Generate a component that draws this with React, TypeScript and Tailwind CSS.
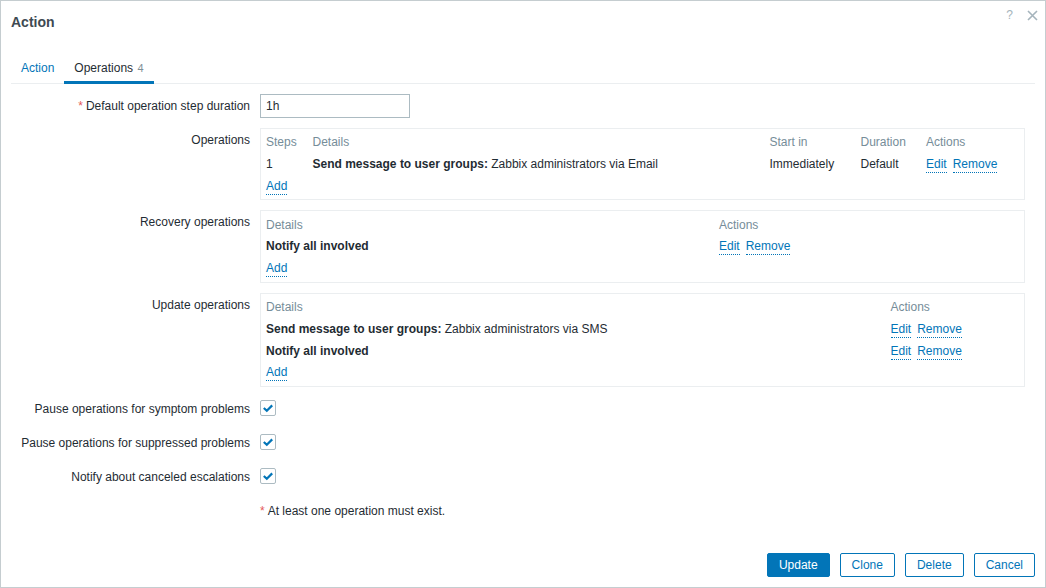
import React from "react";

const Link = ({ children }: { children: React.ReactNode }) => (
  <a className="text-[#0275b8] border-b border-dotted border-[#0275b8] leading-[15px] inline-block mt-[1px]">{children}</a>
);

const Actions = () => (
  <div className="flex gap-[6px]">
    <Link>Edit</Link>
    <Link>Remove</Link>
  </div>
);

const Cell = ({ children, head, short }: { children?: React.ReactNode; head?: boolean; short?: boolean }) => (
  <div className={`${short ? "h-[21px]" : "h-[22px]"} flex items-center ${head ? "text-[#768d99]" : ""}`}>{children}</div>
);

const Row = ({ label, required, children }: { label?: string; required?: boolean; children: React.ReactNode }) => (
  <div className="flex gap-[10px]">
    <div className="w-[249px] shrink-0 text-right leading-[24px]">
      {required && <span className="text-[#e45959] mr-[3px]">*</span>}
      {label}
    </div>
    <div className="flex-1 min-w-0">{children}</div>
  </div>
);

const Check = () => (
  <div className="h-[24px] flex items-start pt-[3px]">
    <div className="w-4 h-4 border border-[#acbbc2] rounded-[2px] flex items-center justify-center">
      <svg width="12" height="12" viewBox="0 0 12 12" fill="none">
        <path d="M1.8 6 L4.8 8.8 L10.2 3.4" stroke="#0275b8" strokeWidth="2.2" />
      </svg>
    </div>
  </div>
);

const Button = ({ children, primary }: { children: React.ReactNode; primary?: boolean }) => (
  <button
    className={`h-6 px-[11px] rounded-[2px] border border-[#0275b8] leading-none ${
      primary ? "bg-[#0275b8] text-white" : "bg-white text-[#0275b8]"
    }`}
  >
    {children}
  </button>
);

export default function App() {
  return (
    <div className="w-[1046px] h-[588px] border border-[#c5cdd0] bg-white flex flex-col text-[12px] text-[#1f2c33] font-['Liberation_Sans',Arial,sans-serif] overflow-hidden">
      <div className="flex justify-between pl-[10px] pr-[7px] h-[52px] shrink-0">
        <h4 className="text-[14px] font-bold text-[#3e4a52] leading-[16px] mt-[13px]">Action</h4>
        <div className="flex items-center gap-[13px] h-[28px] text-[#a5b4bc]">
          <span className="text-[12px] mr-[1px]">?</span>
          <svg width="11" height="11" viewBox="0 0 11 11" fill="none">
            <path d="M1 1 L10 10 M10 1 L1 10" stroke="#a5b4bc" strokeWidth="1.6" />
          </svg>
        </div>
      </div>

      <div className="mx-[10px] h-[31px] shrink-0 border-b border-[#ebeef0] flex">
        <div className="px-[10px] h-[31px] leading-[30px] text-[#0275b8]">Action</div>
        <div className="px-[10px] h-[31px] leading-[30px] border-b-[3px] border-[#0275b8]">
          Operations <span className="text-[#7f8f97] text-[11px] ml-[1px]">4</span>
        </div>
      </div>

      <div className="flex-1 pt-[10px] flex flex-col gap-[10px]">
        <Row label="Default operation step duration" required>
          <input
            readOnly
            value="1h"
            className="w-[150px] h-6 border border-[#acbbc2] px-[5px] outline-none text-[12px]"
          />
        </Row>

        <Row label="Operations">
          <div className="w-[765px] border border-[#ebeef0] px-[5px] py-[2px] grid grid-cols-[46.5px_457px_91px_65.5px_1fr]">
            <Cell head>Steps</Cell>
            <Cell head>Details</Cell>
            <Cell head>Start in</Cell>
            <Cell head>Duration</Cell>
            <Cell head>Actions</Cell>
            <Cell>1</Cell>
            <Cell>
              <span>
                <b>Send message to user groups:</b> Zabbix administrators via Email
              </span>
            </Cell>
            <Cell>Immediately</Cell>
            <Cell>Default</Cell>
            <Cell>
              <Actions />
            </Cell>
            <Cell>
              <Link>Add</Link>
            </Cell>
          </div>
        </Row>

        <Row label="Recovery operations">
          <div className="w-[765px] border border-[#ebeef0] px-[5px] pt-[3px] pb-[3px] grid grid-cols-[453px_1fr]">
            <Cell head short>Details</Cell>
            <Cell head short>Actions</Cell>
            <Cell>
              <b>Notify all involved</b>
            </Cell>
            <Cell>
              <Actions />
            </Cell>
            <Cell>
              <Link>Add</Link>
            </Cell>
          </div>
        </Row>

        <Row label="Update operations">
          <div className="w-[765px] border border-[#ebeef0] px-[5px] pt-[2px] pb-[3px] grid grid-cols-[624.5px_1fr]">
            <Cell head>Details</Cell>
            <Cell head>Actions</Cell>
            <Cell>
              <span>
                <b>Send message to user groups:</b> Zabbix administrators via SMS
              </span>
            </Cell>
            <Cell>
              <Actions />
            </Cell>
            <Cell>
              <b>Notify all involved</b>
            </Cell>
            <Cell>
              <Actions />
            </Cell>
            <Cell short>
              <Link>Add</Link>
            </Cell>
          </div>
        </Row>

        <Row label="Pause operations for symptom problems">
          <Check />
        </Row>
        <Row label="Pause operations for suppressed problems">
          <Check />
        </Row>
        <Row label="Notify about canceled escalations">
          <Check />
        </Row>
        <Row>
          <div className="leading-[24px]">
            <span className="text-[#e45959] mr-[3px]">*</span>At least one operation must exist.
          </div>
        </Row>
      </div>

      <div className="flex justify-end gap-[10px] pr-[10px] pb-[10px] shrink-0">
        <Button primary>Update</Button>
        <Button>Clone</Button>
        <Button>Delete</Button>
        <Button>Cancel</Button>
      </div>
    </div>
  );
}
